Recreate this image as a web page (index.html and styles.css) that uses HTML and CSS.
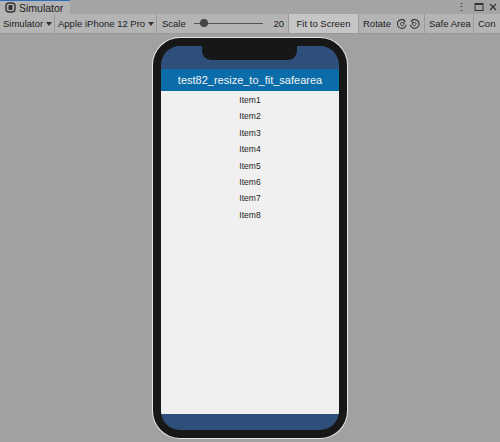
FILE: index.html
```html
<!DOCTYPE html>
<html>
    <head>
        <title>Simulator</title>
        <link rel="stylesheet" href="styles.css">
    </head>
    <body>
        <div class="tabbar">
            <div class="tab">
                <svg class="tab-icon" width="11" height="11" viewBox="0 0 11 11">
                    <rect x="1" y="1" width="9" height="9" rx="3" fill="none" stroke="#333" stroke-width="1.4"/>
                    <rect x="3.5" y="3" width="4" height="5" rx="1" fill="#333"/>
                </svg>
                <span>Simulator</span>
            </div>
            <div class="window-btns">
                <span class="dots">&#8942;</span>
                <svg width="10" height="10" viewBox="0 0 10 10">
                    <rect x="1" y="1.5" width="8" height="7" fill="none" stroke="#333" stroke-width="1"/>
                    <rect x="1" y="1.5" width="8" height="1.5" fill="#333"/>
                </svg>
                <svg width="10" height="10" viewBox="0 0 10 10">
                    <path d="M2 2 L8 8 M8 2 L2 8" stroke="#333" stroke-width="1.2"/>
                </svg>
            </div>
        </div>

        <div class="toolbar">
            <div class="tool device-type">Simulator <span class="caret"></span></div>
            <div class="tool device">Apple iPhone 12 Pro <span class="caret"></span></div>
            <div class="tool scale">
                <span>Scale</span>
                <div class="slider"><div class="knob"></div></div>
                <span class="value">20</span>
            </div>
            <div class="tool fit active">Fit to Screen</div>
            <div class="tool rotate">
                <span>Rotate</span>
                <svg width="12" height="12" viewBox="0 0 12 12">
                    <path d="M9.2 2.6 A4.6 4.6 0 1 0 10.6 6.8" fill="none" stroke="#333" stroke-width="1.1"/>
                    <path d="M7.2 1.2 L9.6 2.8 L8 5" fill="none" stroke="#333" stroke-width="1"/>
                    <path d="M6.5 3.8 L8.7 6 L6.5 8.2 L4.3 6 Z" fill="none" stroke="#333" stroke-width="1"/>
                </svg>
                <svg width="12" height="12" viewBox="0 0 12 12">
                    <path d="M2.8 2.6 A4.6 4.6 0 1 1 1.4 6.8" fill="none" stroke="#333" stroke-width="1.1"/>
                    <path d="M4.8 1.2 L2.4 2.8 L4 5" fill="none" stroke="#333" stroke-width="1"/>
                    <path d="M5.5 3.8 L7.7 6 L5.5 8.2 L3.3 6 Z" fill="none" stroke="#333" stroke-width="1"/>
                </svg>
            </div>
            <div class="tool safe">Safe Area</div>
            <div class="tool last">Con</div>
        </div>

        <div class="viewport">
            <div class="phone">
                <div class="screen">
                    <div class="notch"></div>
                    <div class="top-area"></div>
                    <div class="header">test82_resize_to_fit_safearea</div>
                    <div class="list">
                        <div class="item">Item1</div>
                        <div class="item">Item2</div>
                        <div class="item">Item3</div>
                        <div class="item">Item4</div>
                        <div class="item">Item5</div>
                        <div class="item">Item6</div>
                        <div class="item">Item7</div>
                        <div class="item">Item8</div>
                    </div>
                    <div class="bottom-area"></div>
                </div>
            </div>
        </div>
    </body>
</html>
```

FILE: styles.css
```css
body {
    margin: 0;
    width: 500px;
    height: 442px;
    display: flex;
    flex-direction: column;
    font-family: "Liberation Sans", Arial, sans-serif;
    font-size: 9.5px;
    color: #1c1c1c;
    background: #a1a1a1;
    overflow: hidden;
}

/* window tab row */
.tabbar {
    height: 14px;
    display: flex;
    justify-content: space-between;
    background: #a4a4a4;
}
.tab {
    width: 70px;
    display: flex;
    align-items: center;
    gap: 3px;
    padding-left: 5px;
    box-sizing: border-box;
    background: #b3b3b3;
    border-top: 1px solid #2f6fb5;
    font-size: 10.5px;
}
.tab-icon { flex: none; }
.window-btns {
    display: flex;
    align-items: center;
    gap: 4px;
    padding-right: 2px;
}
.dots {
    font-size: 11px;
    margin-right: 3px;
}

/* toolbar row */
.toolbar {
    height: 19px;
    display: flex;
    align-items: stretch;
    background: #b4b4b4;
    border-bottom: 1px solid #989898;
}
.tool {
    flex: none;
    display: flex;
    align-items: center;
    gap: 4px;
    padding: 0 4px;
    box-sizing: border-box;
    border-right: 1px solid #9a9a9a;
    white-space: nowrap;
}
.caret {
    width: 0;
    height: 0;
    border-left: 3px solid transparent;
    border-right: 3px solid transparent;
    border-top: 4px solid #333;
    margin-left: -1px;
}
.device-type { width: 55px; padding-left: 3px; }
.device { width: 102px; padding-left: 3px; }
.scale { width: 132px; padding-left: 5px; }
.slider {
    position: relative;
    flex: 1;
    height: 1px;
    margin: 0 6px 0 4px;
    background: #555;
}
.knob {
    position: absolute;
    left: 6px;
    top: -4px;
    width: 8px;
    height: 8px;
    border-radius: 50%;
    background: #444;
}
.fit {
    width: 70px;
    justify-content: center;
}
.active { background: #c6c6c6; }
.rotate { width: 66px; gap: 1px; padding-left: 4px; }
.rotate span { margin-right: 4px; }
.safe { width: 49px; padding-left: 4px; }
.last { border-right: none; }

/* simulator viewport */
.viewport {
    flex: 1;
    display: flex;
    justify-content: center;
    align-items: center;
}
.phone {
    width: 194px;
    height: 400px;
    box-sizing: border-box;
    padding: 8px;
    border-radius: 27px;
    background: #171717;
    box-shadow: 0 0 0 1px #e4e4e4;
}
.screen {
    position: relative;
    height: 100%;
    display: flex;
    flex-direction: column;
    border-radius: 19px;
    overflow: hidden;
    background: #2f4f7b;
}
.notch {
    position: absolute;
    top: 0;
    left: 41px;
    width: 95px;
    height: 14px;
    background: #171717;
    border-radius: 0 0 9px 9px;
}
.top-area { height: 23px; }
.header {
    height: 22px;
    display: flex;
    align-items: center;
    justify-content: center;
    background: #0a6ca8;
    color: #f4f4f4;
    font-size: 11px;
}
.list {
    flex: 1;
    padding-top: 1px;
    background: #f0f0f0;
}
.item {
    height: 16.4px;
    line-height: 16.4px;
    text-align: center;
    font-size: 8.5px;
    color: #222;
}
.bottom-area { height: 16px; }
```
